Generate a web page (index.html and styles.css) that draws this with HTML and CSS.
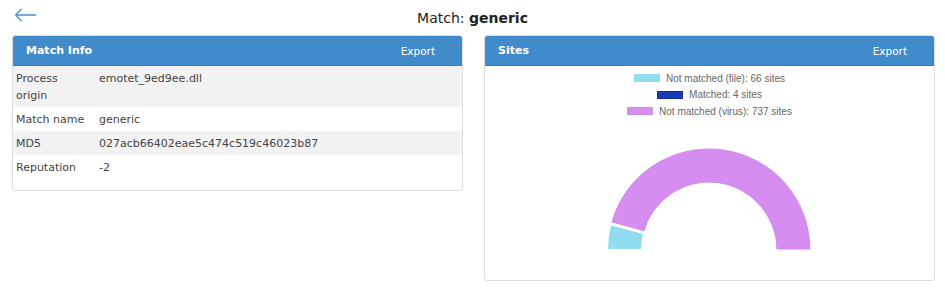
FILE: index.html
```html
<!DOCTYPE html>
<html lang="en">
<head>
    <meta charset="UTF-8">
    <meta name="viewport" content="width=device-width, initial-scale=1.0">
    <title>Match: generic</title>

    <link rel="stylesheet" href="styles.css">
</head>
<body>
    <div class="topbar">
        <a href="#" class="back">
            <svg width="23" height="14" viewBox="0 0 23 14">
                <path d="M1.5 7 H22 M1.5 7 L7.5 1 M1.5 7 L7.5 13" fill="none" stroke="#4a8fd0" stroke-width="1.4"/>
            </svg>
        </a>
        <h1 class="title">Match: <b>generic</b></h1>
        <div></div>
    </div>

    <div class="panels">
        <div class="panel">
            <div class="panel-head">
                <span class="panel-title">Match Info</span>
                <a href="#" class="export">Export</a>
            </div>
            <table class="info">
                <tr>
                    <td class="label">Process origin</td>
                    <td>emotet_9ed9ee.dll</td>
                </tr>
                <tr>
                    <td class="label">Match name</td>
                    <td>generic</td>
                </tr>
                <tr>
                    <td class="label">MD5</td>
                    <td>027acb66402eae5c474c519c46023b87</td>
                </tr>
                <tr>
                    <td class="label">Reputation</td>
                    <td>-2</td>
                </tr>
            </table>
        </div>

        <div class="panel">
            <div class="panel-head">
                <span class="panel-title">Sites</span>
                <a href="#" class="export">Export</a>
            </div>
            <div class="legend">
                <div class="legend-item"><span class="swatch file"></span>Not matched (file): 66 sites</div>
                <div class="legend-item"><span class="swatch matched"></span>Matched: 4 sites</div>
                <div class="legend-item"><span class="swatch virus"></span>Not matched (virus): 737 sites</div>
            </div>
            <svg class="chart" width="449" height="160" viewBox="0 0 449 160">
                <path d="M122 130 A102 102 0 0 1 125.35 104.08 L159.2 112.98 A67 67 0 0 0 157 130 Z" fill="#91ddef" stroke="#fff" stroke-width="2"/>
                <path d="M125.35 104.08 A102 102 0 0 1 125.76 102.55 L159.47 111.97 A67 67 0 0 0 159.2 112.98 Z" fill="#1b3bb6" stroke="#fff" stroke-width="2"/>
                <path d="M125.76 102.55 A102 102 0 0 1 326 130 L291 130 A67 67 0 0 0 159.47 111.97 Z" fill="#d58ef0" stroke="#fff" stroke-width="1"/>
            </svg>
        </div>
    </div>
</body>
</html>
```

FILE: styles.css
```css
body {
    margin: 0;
    font-family: "DejaVu Sans", sans-serif;
    color: #333;
    background: #fff;
}

.topbar {
    display: grid;
    grid-template-columns: 1fr auto 1fr;
    align-items: center;
    height: 35px;
}

.back {
    display: flex;
    padding: 0 0 6px 14px;
}

.title {
    margin: 0;
    font-size: 14px;
    font-weight: normal;
    color: #222;
    padding-top: 1px;
}

.panels {
    display: grid;
    grid-template-columns: 1fr 1fr;
    gap: 21px;
    padding: 0 10px 0 12px;
    align-items: start;
}

.panel {
    border: 1px solid #ddd;
    border-radius: 3px;
    overflow: hidden;
}

.panel-head {
    display: flex;
    justify-content: space-between;
    align-items: center;
    height: 29px;
    background: #428bca;
    border-bottom: 1px solid #3a7bb5;
    padding: 0 27px 0 13px;
    color: #fff;
    font-size: 11px;
}

.panel-title {
    font-weight: bold;
}

.export {
    color: #fff;
    text-decoration: none;
    font-size: 10.5px;
}

.info {
    width: 100%;
    table-layout: fixed;
    border-collapse: collapse;
    font-size: 11px;
    line-height: 17px;
    color: #444;
    margin-bottom: 11px;
}

.info td {
    padding: 4px 3px 3px 3px;
    vertical-align: top;
}

.info tr:nth-child(odd) {
    background: #f2f2f2;
}

.info .label {
    width: 74px;
    padding-right: 6px;
}

.legend {
    display: flex;
    flex-direction: column;
    align-items: center;
    padding-top: 4px;
    font-family: "Liberation Sans", Arial, sans-serif;
    font-size: 10px;
    color: #666;
}

.legend-item {
    display: flex;
    align-items: center;
    height: 16.5px;
}

.swatch {
    width: 26px;
    height: 8px;
    margin-right: 6px;
    box-sizing: border-box;
}

.swatch.file {
    background: #91ddef;
}

.swatch.matched {
    background: #1b3bb6;
    border: 1px solid #132d9a;
}

.swatch.virus {
    background: #d58ef0;
}

.chart {
    display: block;
}
```
